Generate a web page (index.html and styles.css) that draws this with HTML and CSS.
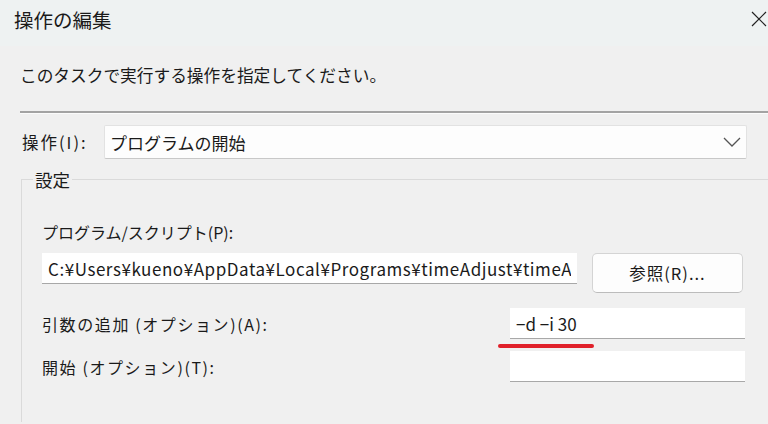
FILE: index.html
```html
<!DOCTYPE html>
<html lang="ja">
<head>
    <meta charset="UTF-8">
    <meta name="viewport" content="width=device-width, initial-scale=1.0">
    <title>操作の編集</title>
    <link rel="stylesheet" href="styles.css">
</head>
<body>
    <div class="titlebar">
        <span class="title">操作の編集</span>
        <svg class="close" width="16" height="16" viewBox="0 0 16 16">
            <path d="M1 1 L15 15 M15 1 L1 15" stroke="#222" stroke-width="1.2" fill="none"/>
        </svg>
    </div>

    <div class="dialog">
        <p class="instruction">このタスクで実行する操作を指定してください。</p>
        <div class="separator"></div>

        <div class="action-row">
            <label class="action-label">操作(I):</label>
            <div class="select">
                <span>プログラムの開始</span>
                <svg width="20" height="12" viewBox="0 0 20 12">
                    <path d="M2 2 L10 10 L18 2" stroke="#555" stroke-width="1.3" fill="none"/>
                </svg>
            </div>
        </div>

        <fieldset class="settings">
            <legend>設定</legend>

            <div class="field-label">プログラム/スクリプト(P):</div>
            <div class="program-row">
                <input type="text" class="text-input path" value="C:¥Users¥kueno¥AppData¥Local¥Programs¥timeAdjust¥timeAdjust.exe">
                <button class="browse-btn">参照(R)...</button>
            </div>

            <div class="option-row args">
                <span class="field-label wide">引数の追加 (オプション)(A):</span>
                <div class="short-wrap">
                    <input type="text" class="text-input short" value="−d −i 30">
                    <span class="mark"></span>
                </div>
            </div>

            <div class="option-row">
                <span class="field-label wide">開始 (オプション)(T):</span>
                <div class="short-wrap">
                    <input type="text" class="text-input short" value="">
                </div>
            </div>
        </fieldset>
    </div>
</body>
</html>
```
FILE: styles.css
```css
body {
    margin: 0;
    width: 768px;
    height: 424px;
    overflow: hidden;
    background-color: #f0f0f0;
    font-family: "Noto Sans CJK JP", "Noto Sans", sans-serif;
    color: #1a1a1a;
}

.titlebar {
    height: 46px;
    background-color: #eef2f2;
    display: flex;
    align-items: center;
    justify-content: space-between;
    padding: 0 0 0 14px;
}

.title {
    font-size: 19.5px;
    margin-top: -8px;
}

.close {
    margin-right: 1px;
    margin-top: -8px;
}

.dialog {
    padding-left: 20px;
}

.instruction {
    margin: 0;
    padding-top: 16px;
    font-size: 16.7px;
    line-height: 26px;
}

.separator {
    margin-top: 23px;
    height: 0;
    border-top: 2px solid #a3a3a3;
    border-bottom: 1px solid #fbfbfb;
}

.action-row {
    display: flex;
    align-items: center;
    margin-top: 11px;
    margin-left: 2px;
}

.action-label {
    width: 82px;
    font-size: 16.5px;
    letter-spacing: 2px;
}

.select {
    width: 632px;
    height: 32px;
    background: #fdfdfd;
    border: 1px solid #e2e2e2;
    border-bottom-color: #c8c8c8;
    border-radius: 2px;
    display: flex;
    align-items: center;
    justify-content: space-between;
    padding: 0 4px 0 5px;
    font-size: 17px;
}

.settings {
    margin: 8px 0 0 1px;
    padding: 0 0 40px 20px;
    border: none;
    border-top: 1px solid #dadada;
    border-left: 1px solid #dadada;
    min-width: 0;
}

.settings legend {
    font-size: 17.5px;
    padding: 0 2px;
    margin-left: -9px;
}

.field-label {
    font-size: 16px;
    white-space: nowrap;
}

.field-label.wide {
    letter-spacing: 1.6px;
}

.settings > .field-label {
    margin-top: 28px;
}

.program-row {
    display: flex;
    align-items: flex-start;
    margin-top: 9px;
}

.text-input {
    display: block;
    height: 31px;
    margin: 0;
    background: #ffffff;
    border: none;
    border-bottom: 1px solid #a8a8a8;
    border-radius: 0;
    box-sizing: border-box;
    padding: 0 6px;
    font-family: "Noto Sans CJK JP", sans-serif;
    font-size: 17px;
    color: #1a1a1a;
    outline: none;
}

.path {
    width: 535px;
    letter-spacing: 0.55px;
}

.browse-btn {
    margin-left: 15px;
    width: 151px;
    height: 40px;
    background: #fdfdfd;
    border: 1px solid #d4d4d4;
    border-bottom-color: #bcbcbc;
    border-radius: 5px;
    font-family: "Noto Sans CJK JP", sans-serif;
    font-size: 16.5px;
    letter-spacing: 1px;
    color: #1a1a1a;
}

.option-row {
    display: flex;
    align-items: center;
    justify-content: space-between;
    width: 703px;
    margin-top: 12px;
}

.option-row.args {
    margin-top: 15px;
}

.short-wrap {
    position: relative;
}

.short {
    width: 235px;
}

.mark {
    position: absolute;
    left: -12px;
    top: calc(100% + 5px);
    width: 96px;
    height: 4px;
    border-radius: 2px;
    background: #e0202a;
}
```
